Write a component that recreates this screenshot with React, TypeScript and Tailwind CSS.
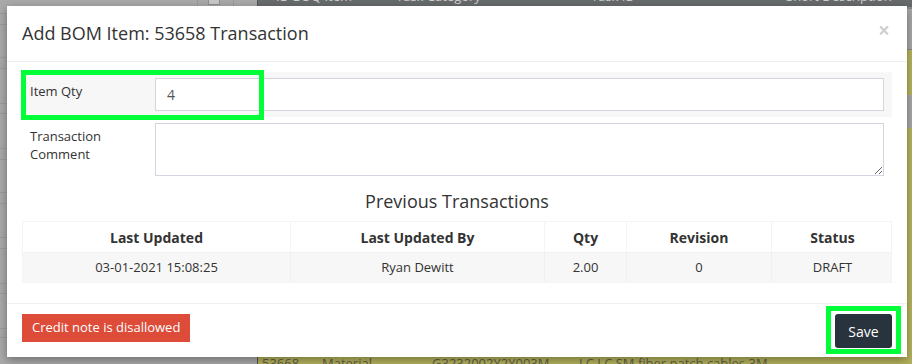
import React from "react";

const font = { fontFamily: "'Open Sans', 'Noto Sans', sans-serif" };

function Background() {
  const lines = [13, 24, 57, 68, 103, 113, 148, 159, 192, 203, 237, 248, 283, 293, 328, 337];
  return (
    <div className="flex h-full w-full">
      <div className="relative w-[257px] h-full bg-[#a9a9a9]">
        {lines.map((y) => (
          <div key={y} className="absolute left-0 right-0 h-px bg-[#9c9c9c]" style={{ top: y }} />
        ))}
        <div className="absolute left-[208px] top-0 w-[12px] h-[5px] bg-[#c9c9c9] border border-[#8f8f8f] border-t-0" />
        <div className="absolute left-[197px] top-0 w-px h-[6px] bg-[#999]" />
        <div className="absolute left-[233px] top-0 w-px h-[6px] bg-[#999]" />
      </div>
      <div className="flex-1 flex flex-col border-l border-[#555]">
        <div className="h-[7px] bg-[#676b6c] overflow-hidden text-[13px] text-[#cfcfcf] flex">
          <span className="-mt-[13px] ml-[18px] w-[120px]">ID BOQ Item</span>
          <span className="-mt-[13px] w-[195px]">Task Category</span>
          <span className="-mt-[13px] w-[195px]">Task ID</span>
          <span className="-mt-[13px]">Short Description</span>
        </div>
        <div className="h-[43px] bg-[#a8a8a8] border-t-[2px] border-[#8a8a8a] border-b" />
        <div className="h-[45px] bg-[#b6b45e]" />
        <div className="h-[33px] bg-[#a8a8a8]" />
        <div className="flex-1 bg-[#b6b45e]" />
        <div className="h-[7px] bg-[#b4b25c] overflow-hidden text-[13px] text-[#5f5f4a] flex">
          <span className="-mt-[3px] ml-[4px] w-[60px]">53668</span>
          <span className="-mt-[3px] w-[110px]">Material</span>
          <span className="-mt-[3px] w-[147px]">G3232002Y2Y003M</span>
          <span className="-mt-[3px]">LC LC SM fiber patch cables 3M</span>
        </div>
      </div>
    </div>
  );
}

export default function App() {
  const cols = "grid grid-cols-[268px_254px_82px_145px_121px]";
  return (
    <div className="relative w-[912px] h-[364px] overflow-hidden" style={font}>
      <Background />
      <div className="absolute left-[7px] top-[6px] w-[900px] h-[351px] bg-white shadow-[0_3px_9px_rgba(0,0,0,0.35)] flex flex-col text-[#333]">
        {/* header */}
        <div className="h-[56px] border-b border-[#f0f0f0] flex items-start justify-between pl-[15px] pr-[17px]">
          <h4 className="text-[18px] leading-[26px] mt-[14px]">Add BOM Item: 53658 Transaction</h4>
          <span className="text-[21px] font-bold leading-none mt-[14px] text-black/20">×</span>
        </div>
        {/* body */}
        <div className="px-[15px] pt-[10px] text-[13px]">
          <div className="relative flex bg-[#f7f7f7] py-[6px] pr-[8px]">
            <label className="w-[133px] pl-[8px] pt-[4px] leading-[18px]">Item Qty</label>
            <input
              readOnly
              value="4"
              className="flex-1 h-[33px] border border-[#d2d6de] bg-white px-[11px] text-[14px] text-[#555] outline-none"
              style={font}
            />
            <div className="absolute left-[-1px] top-[-2px] w-[243px] h-[50px] border-[5px] border-[#00ff38]" />
          </div>
          <div className="flex py-[6px] pr-[8px]">
            <label className="w-[133px] pl-[8px] pt-[4px] leading-[18px]">
              Transaction
              <br />
              Comment
            </label>
            <textarea
              readOnly
              className="flex-1 h-[53px] border border-[#d2d6de] bg-white outline-none"
            />
          </div>
          <h4 className="text-center text-[18px] leading-[26px] mt-[6px] mb-[7px]">Previous Transactions</h4>
          <div className="border border-[#f4f4f4] w-[870px]">
            <div className={`${cols} font-bold text-[14px] text-center`}>
              <div className="h-[30px] flex items-center justify-center border-r border-[#f4f4f4]">Last Updated</div>
              <div className="h-[30px] flex items-center justify-center border-r border-[#f4f4f4]">Last Updated By</div>
              <div className="h-[30px] flex items-center justify-center border-r border-[#f4f4f4]">Qty</div>
              <div className="h-[30px] flex items-center justify-center border-r border-[#f4f4f4]">Revision</div>
              <div className="h-[30px] flex items-center justify-center">Status</div>
            </div>
            <div className={`${cols} text-center bg-[#f7f7f7] border-t border-[#f0f0f0]`}>
              <div className="h-[29px] flex items-center justify-center border-r border-[#f0f0f0]">03-01-2021 15:08:25</div>
              <div className="h-[29px] flex items-center justify-center border-r border-[#f0f0f0]">Ryan Dewitt</div>
              <div className="h-[29px] flex items-center justify-center border-r border-[#f0f0f0]">2.00</div>
              <div className="h-[29px] flex items-center justify-center border-r border-[#f0f0f0]">0</div>
              <div className="h-[29px] flex items-center justify-center">DRAFT</div>
            </div>
          </div>
        </div>
        {/* footer */}
        <div className="mt-auto h-[54px] border-t border-[#f0f0f0] flex items-start justify-between px-[15px] pt-[10px]">
          <button className="h-[28px] px-[10px] bg-[#dd4b39] text-white text-[13px]" style={font}>
            Credit note is disallowed
          </button>
          <div className="relative">
            <button className="h-[34px] w-[57px] rounded-[3px] bg-[#29333d] text-white text-[14px]" style={font}>
              Save
            </button>
            <div className="absolute left-[-9px] top-[-8px] w-[75px] h-[48px] border-[5px] border-[#00ff38]" />
          </div>
        </div>
      </div>
    </div>
  );
}
